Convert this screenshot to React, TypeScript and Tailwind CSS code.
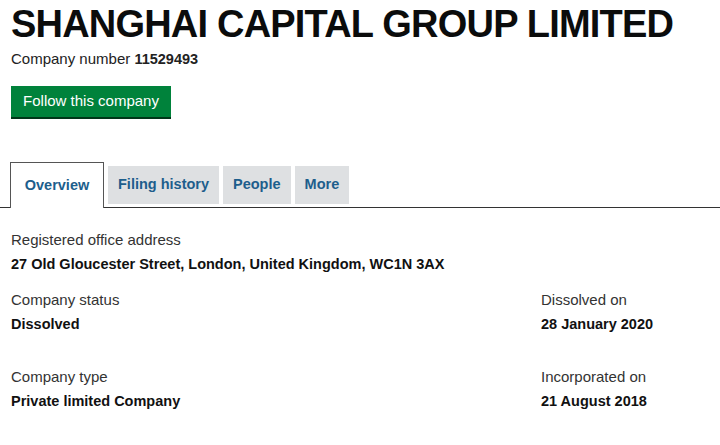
const font = { fontFamily: '"Liberation Sans", Arial, sans-serif' };

function Field({ label, value }: { label: string; value: string }) {
  return (
    <div className="flex flex-col">
      <span className="text-[15px] leading-[18px] text-[#333]">{label}</span>
      <span className="mt-[6px] text-[14.5px] leading-[18px] font-bold text-[#111]">{value}</span>
    </div>
  );
}

export default function App() {
  const tabs = ['Filing history', 'People', 'More'];
  return (
    <main className="w-[720px] h-[445px] bg-white overflow-hidden" style={font}>
      <div className="pl-[11px] pt-[4px]">
        <h1 className="text-[38px] leading-[40px] font-bold text-[#0b0c0c] tracking-[-0.8px]">
          SHANGHAI CAPITAL GROUP LIMITED
        </h1>
        <p className="mt-[6px] text-[15px] leading-[18px] text-[#222]">
          Company number <span className="font-bold text-[14.5px]">11529493</span>
        </p>
        <button className="mt-[18px] h-[31px] w-[160px] bg-[#00823b] text-white text-[15px] shadow-[0_2px_0_#003618]">
          Follow this company
        </button>
      </div>

      {/* tabs */}
      <div className="mt-[45px] flex items-end">
        <div className="w-[10px] shrink-0 border-b border-[#333]" />
        <div className="w-[94px] h-[46px] shrink-0 border border-b-0 border-[#555] flex items-center justify-center text-[14.5px] font-bold text-[#1d5e8c]">
          Overview
        </div>
        <div className="flex-1 flex items-end gap-[4px] pl-[4px] pb-[3px] border-b border-[#333]">
          {tabs.map((t) => (
            <div
              key={t}
              className="h-[38px] px-[10px] bg-[#dee0e2] flex items-center text-[14.5px] font-bold text-[#1d5e8c]"
            >
              {t}
            </div>
          ))}
        </div>
      </div>

      <section className="pl-[11px] pt-[23px] pr-[20px]">
        <Field label="Registered office address" value="27 Old Gloucester Street, London, United Kingdom, WC1N 3AX" />
        <div className="mt-[18px] grid grid-cols-[530px_1fr]">
          <Field label="Company status" value="Dissolved" />
          <Field label="Dissolved on" value="28 January 2020" />
        </div>
        <div className="mt-[35px] grid grid-cols-[530px_1fr]">
          <Field label="Company type" value="Private limited Company" />
          <Field label="Incorporated on" value="21 August 2018" />
        </div>
      </section>
    </main>
  );
}
